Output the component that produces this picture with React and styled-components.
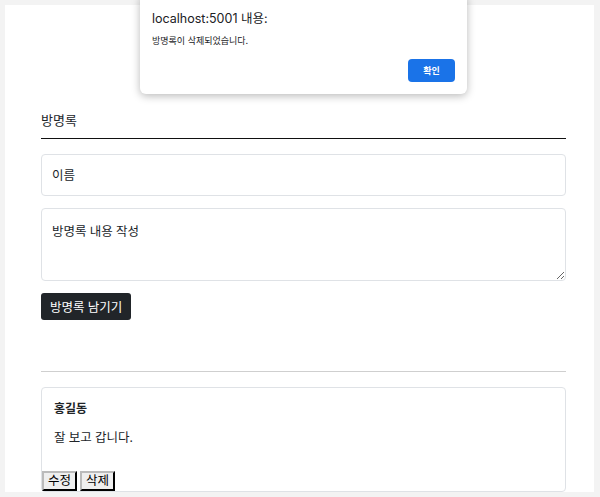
import React from "react";
import styled, { createGlobalStyle } from "styled-components";

const Global = createGlobalStyle`
  html, body {
    margin: 0;
    padding: 0;
    background: #f3f3f3;
  }
  * { box-sizing: border-box; }
`;

const font = `"Noto Sans", "Noto Sans CJK KR", sans-serif`;

const Frame = styled.div`
  width: 600px;
  height: 497px;
  padding: 5px 6px 5px 5px;
  position: relative;
  overflow: hidden;
  font-family: ${font};
  color: #212529;
`;

const Page = styled.div`
  background: #fff;
  height: 487px;
  padding: 107px 28px 0 36px;
  display: flex;
  flex-direction: column;
  overflow: hidden;
  & > * { flex-shrink: 0; }
`;

const Title = styled.div`
  font-size: 13px;
  line-height: 16px;
  padding-bottom: 10px;
  border-bottom: 1.5px solid #111;
`;

const Field = styled.input`
  margin-top: 15px;
  height: 42px;
  border: 1px solid #dfe2e6;
  border-radius: 4px;
  padding: 0 10px;
  font-family: ${font};
  font-size: 12.5px;
  color: #212529;
  outline: none;
  &::placeholder { color: #212529; }
`;

const Area = styled.textarea`
  margin-top: 12px;
  height: 73px;
  border: 1px solid #dfe2e6;
  border-radius: 4px;
  padding: 12px 10px;
  font-family: ${font};
  font-size: 12.5px;
  color: #212529;
  outline: none;
  resize: vertical;
  &::placeholder { color: #212529; }
`;

const Submit = styled.button`
  align-self: flex-start;
  margin-top: 12px;
  height: 27px;
  padding: 0 9px;
  background: #212529;
  color: #fff;
  border: none;
  border-radius: 3px;
  font-family: ${font};
  font-size: 12.5px;
`;

const Rule = styled.div`
  margin-top: 51px;
  border-top: 1px solid #cfcfcf;
`;

const Card = styled.div`
  margin-top: 15px;
  border: 1px solid #dfe2e6;
  border-radius: 4px;
  height: 105px;
`;

const CardBody = styled.div`
  padding: 13px 12px 0;
`;

const Name = styled.div`
  font-size: 12px;
  font-weight: 700;
  line-height: 16px;
`;

const Message = styled.div`
  margin-top: 13px;
  font-size: 12.5px;
  line-height: 16px;
`;

const Actions = styled.div`
  display: flex;
  gap: 3px;
  margin-top: 25px;
`;

const SmallButton = styled.button`
  height: 20px;
  padding: 0 4px;
  font-family: ${font};
  font-size: 12.5px;
  line-height: 1;
  color: #000;
  background: #efefef;
  border: 2px outset #767676;
  border-color: #bbb #333 #333 #bbb;
`;

const Dialog = styled.div`
  position: absolute;
  left: 140px;
  top: -6px;
  width: 327px;
  height: 100px;
  background: #fff;
  border-radius: 6px;
  box-shadow: 0 2px 8px rgba(0,0,0,0.28);
  padding: 18px 12px 0 12px;
  display: flex;
  flex-direction: column;
  font-family: "Inter", "Noto Sans CJK KR", sans-serif;
`;

const DialogTitle = styled.div`
  font-size: 12.5px;
  line-height: 14px;
  color: #202124;
`;

const DialogText = styled.div`
  margin-top: 9px;
  font-size: 9px;
  line-height: 12px;
  color: #202124;
`;

const DialogFoot = styled.div`
  display: flex;
  justify-content: flex-end;
  margin-top: 12px;
`;

const Ok = styled.button`
  width: 47px;
  height: 23px;
  background: #1a73e8;
  color: #fff;
  border: none;
  border-radius: 4px;
  font-family: "Inter", "Noto Sans CJK KR", sans-serif;
  font-size: 9px;
  font-weight: 600;
`;

export default function App() {
  return (
    <>
      <Global />
      <Frame>
        <Page>
          <Title>방명록</Title>
          <Field placeholder="이름" />
          <Area placeholder="방명록 내용 작성" />
          <Submit>방명록 남기기</Submit>
          <Rule />
          <Card>
            <CardBody>
              <Name>홍길동</Name>
              <Message>잘 보고 갑니다.</Message>
            </CardBody>
            <Actions>
              <SmallButton>수정</SmallButton>
              <SmallButton>삭제</SmallButton>
            </Actions>
          </Card>
        </Page>
        <Dialog>
          <DialogTitle>localhost:5001 내용:</DialogTitle>
          <DialogText>방명록이 삭제되었습니다.</DialogText>
          <DialogFoot>
            <Ok>확인</Ok>
          </DialogFoot>
        </Dialog>
      </Frame>
    </>
  );
}
